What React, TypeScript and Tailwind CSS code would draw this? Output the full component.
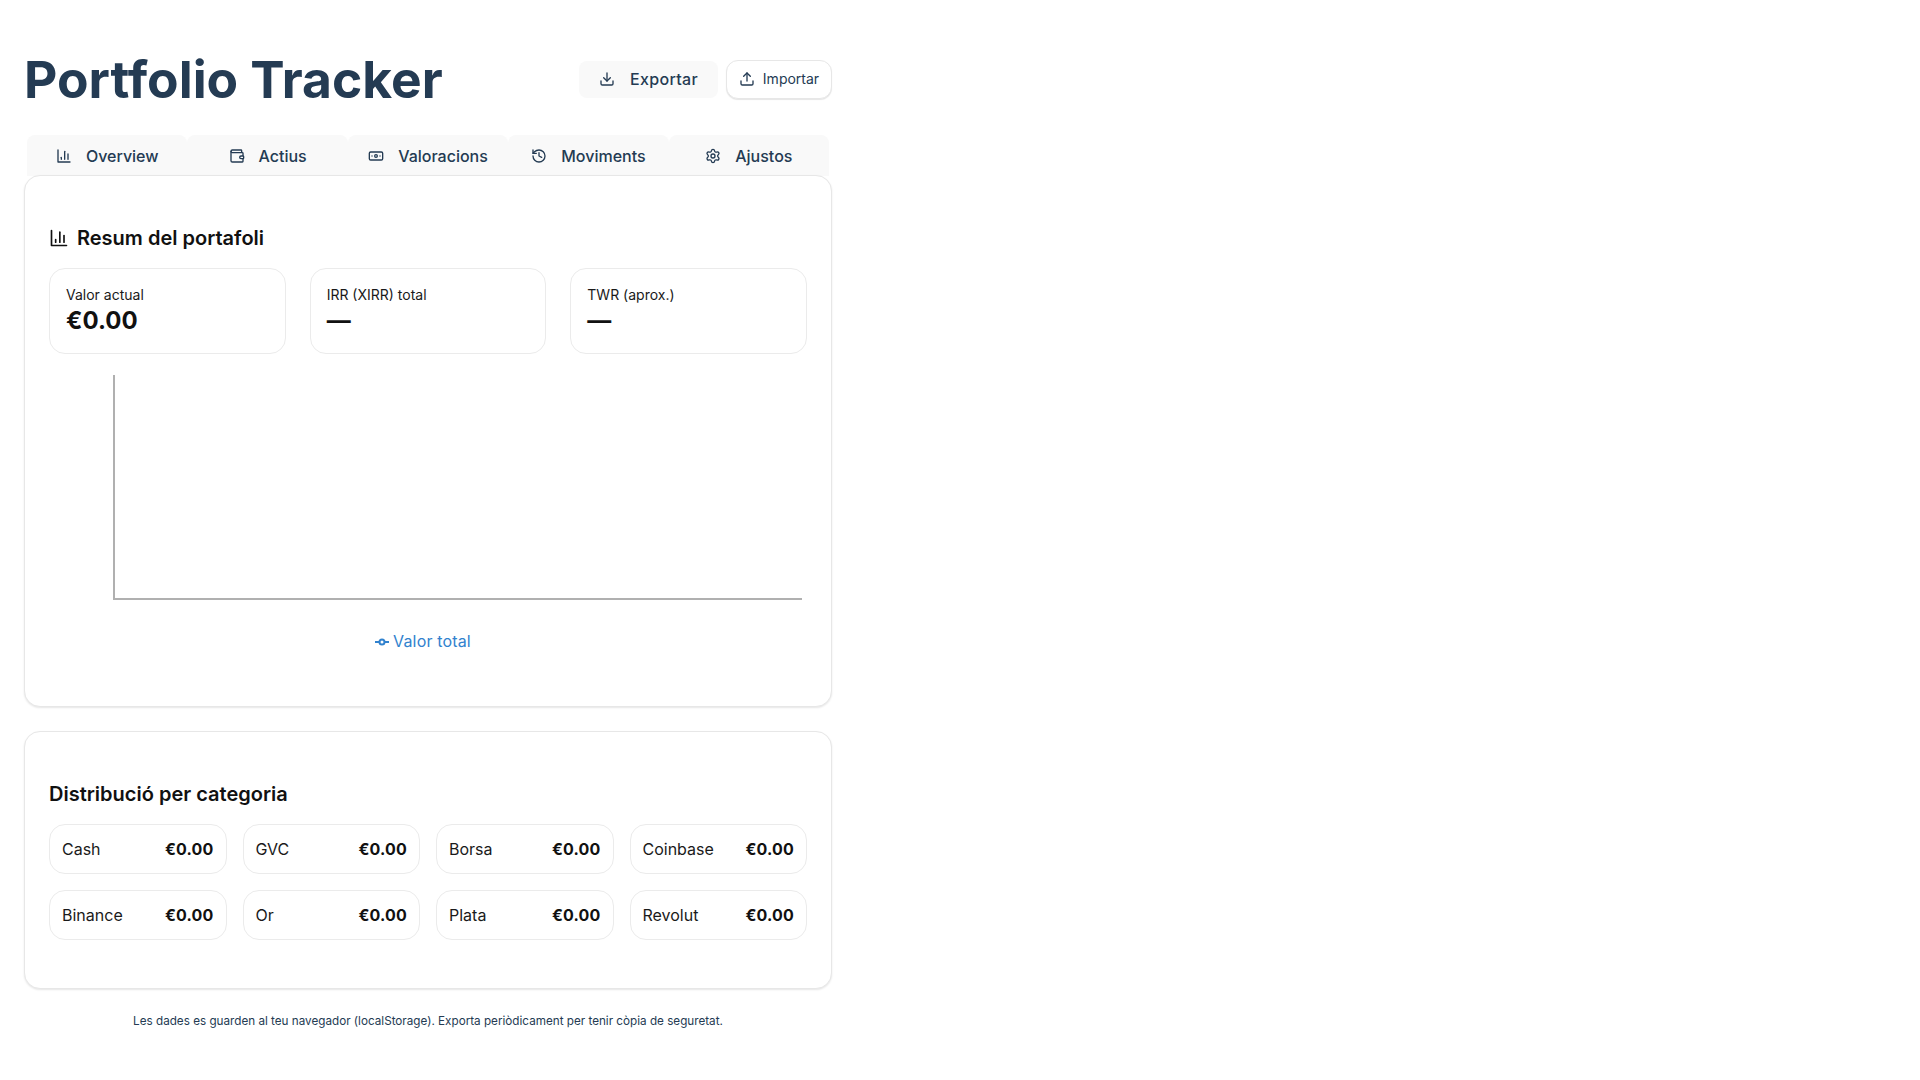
import { Banknote, Download, History, Settings, Upload, Wallet } from 'lucide-react';
import type { ReactNode } from 'react';

function BarsIcon({ className }: { className?: string }) {
    return (
        <svg className={className} viewBox="0 0 24 24" fill="none" stroke="currentColor" strokeWidth={2} strokeLinecap="round" strokeLinejoin="round">
            <path d="M3 3v18h18" />
            <path d="M18 17V9" />
            <path d="M13 17V5" />
            <path d="M8 17v-3" />
        </svg>
    );
}

const TABS = [
    { label: 'Overview', icon: BarsIcon },
    { label: 'Actius', icon: Wallet },
    { label: 'Valoracions', icon: Banknote },
    { label: 'Moviments', icon: History },
    { label: 'Ajustos', icon: Settings },
];

const STATS = [
    { label: 'Valor actual', value: '€0.00' },
    { label: 'IRR (XIRR) total', value: '—' },
    { label: 'TWR (aprox.)', value: '—' },
];

const CATEGORIES = ['Cash', 'GVC', 'Borsa', 'Coinbase', 'Binance', 'Or', 'Plata', 'Revolut'];

function Card({ children }: { children: ReactNode }) {
    return (
        <div className="rounded-2xl border border-[#e7e7e7] bg-white px-6 pt-12 pb-12 shadow-[0_1px_2px_rgba(0,0,0,0.1)]">
            {children}
        </div>
    );
}

export default function App() {
    return (
        <div className="w-[856px] p-6 pt-[51px] font-['Inter',sans-serif] text-[#243b53]">
            {/* Header */}
            <div className="flex items-center justify-between">
                <h1 className="text-[51.5px] leading-[56px] font-bold">Portfolio Tracker</h1>
                <div className="flex items-center gap-2">
                    <button className="flex h-[37px] w-[139px] items-center justify-center gap-[15px] rounded-lg bg-[#f9f9f9] text-base font-medium tracking-[0.02em]">
                        <Download className="h-4 w-4" />
                        Exportar
                    </button>
                    <button className="flex h-[39px] w-[106px] items-center justify-center gap-[8px] rounded-xl border border-[#e7e7e7] bg-white text-sm shadow-[0_1px_1px_rgba(0,0,0,0.1)]">
                        <Upload className="h-4 w-4" />
                        Importar
                    </button>
                </div>
            </div>

            {/* Tabs */}
            <div className="mt-[28px] flex px-[3px]">
                {TABS.map((tab) => (
                    <div key={tab.label} className="flex h-[41px] flex-1 items-center justify-center gap-[14px] rounded-t-lg bg-[#f9f9f9] text-base font-medium">
                        <tab.icon className="h-4 w-4" />
                        {tab.label}
                    </div>
                ))}
            </div>

            <div className="-mt-px flex flex-col gap-6">
                <Card>
                    <h2 className="flex items-center gap-2 text-xl font-semibold text-[#111111]">
                        <BarsIcon className="h-5 w-5" />
                        Resum del portafoli
                    </h2>
                    <div className="mt-4 grid grid-cols-3 gap-6">
                        {STATS.map((stat) => (
                            <div key={stat.label} className="rounded-2xl border border-[#ebebeb] p-4">
                                <p className="text-sm leading-5 text-[#1a1a1a]">{stat.label}</p>
                                <p className="text-2xl leading-8 font-bold text-[#111111]">{stat.value}</p>
                            </div>
                        ))}
                    </div>

                    {/* Chart */}
                    <div className="mt-4 h-72">
                        <svg className="h-[231px] w-full" viewBox="0 0 758 231">
                            <path d="M65 5V229H753" fill="none" stroke="#b0b0b0" strokeWidth={2} />
                        </svg>
                        <div className="mt-[28px] flex items-center justify-center gap-1 pr-[10px] text-base tracking-[0.01em] text-[#3182ce]">
                            <svg className="h-[14px] w-[14px]" viewBox="0 0 14 14" fill="none" stroke="#3182ce" strokeWidth={2}>
                                <path d="M0 8H4.5M9.5 8H14" />
                                <circle cx="7" cy="8" r="2.5" />
                            </svg>
                            Valor total
                        </div>
                    </div>
                </Card>

                <Card>
                    <h2 className="text-xl font-semibold text-[#111111]">Distribució per categoria</h2>
                    <div className="mt-4 grid grid-cols-4 gap-4">
                        {CATEGORIES.map((name) => (
                            <div key={name} className="flex h-[50px] items-center justify-between rounded-2xl border border-[#ebebeb] px-[12px] text-base text-[#1a1a1a]">
                                <span>{name}</span>
                                <span className="font-bold tracking-[0.01em] text-[#111111]">€0.00</span>
                            </div>
                        ))}
                    </div>
                </Card>
            </div>

            <p className="mt-6 text-center text-[11.7px]">Les dades es guarden al teu navegador (localStorage). Exporta periòdicament per tenir còpia de seguretat.</p>
        </div>
    );
}
